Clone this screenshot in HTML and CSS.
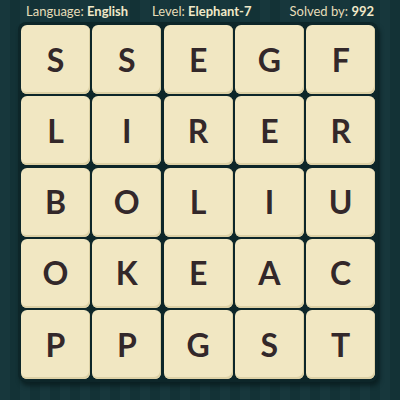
FILE: index.html
```html
<!DOCTYPE html>
<html>
<head>
<meta charset="utf-8">
<link rel="stylesheet" href="styles.css">
</head>
<body>
<div class="page">
  <div class="header">
    <span class="info">Language: <b>English</b></span>
    <span class="info">Level: <b>Elephant-7</b></span>
    <span class="info solved">Solved by: <b>992</b></span>
  </div>
  <div class="board">
    <div class="tile">S</div><div class="tile">S</div><div class="tile">E</div><div class="tile">G</div><div class="tile">F</div>
    <div class="tile">L</div><div class="tile">I</div><div class="tile">R</div><div class="tile">E</div><div class="tile">R</div>
    <div class="tile">B</div><div class="tile">O</div><div class="tile">L</div><div class="tile">I</div><div class="tile">U</div>
    <div class="tile">O</div><div class="tile">K</div><div class="tile">E</div><div class="tile">A</div><div class="tile">C</div>
    <div class="tile">P</div><div class="tile">P</div><div class="tile">G</div><div class="tile">S</div><div class="tile">T</div>
  </div>
</div>
</body>
</html>
```
FILE: styles.css
```css
html, body {
  margin: 0;
  padding: 0;
}
body {
  width: 400px;
  height: 400px;
  overflow: hidden;
  background: repeating-linear-gradient(90deg, #17373c 0px, #17373c 10px, #133236 10px, #133236 20px);
  font-family: Lato, "Open Sans", sans-serif;
}
.page {
  display: flex;
  flex-direction: column;
  width: 400px;
  height: 400px;
}
.header {
  height: 22px;
  display: flex;
  align-items: center;
  gap: 24px;
  padding: 0 26px 0 26px;
  color: #e6ddb9;
  font-size: 13px;
  box-sizing: border-box;
}
.solved {
  margin-left: auto;
}
.info b {
  font-weight: 700;
  color: #f0e8c8;
}
.board {
  margin-left: 18px;
  width: 360px;
  box-sizing: border-box;
  padding: 3px;
  background: #0d2629;
  border-radius: 8px;
  box-shadow: 2px 4px 4px rgba(5, 20, 22, 0.6);
  display: grid;
  grid-template-columns: repeat(5, 69px);
  grid-auto-rows: 69px;
  gap: 2.3px;
}
.tile {
  background: #f1e7c2;
  border-radius: 6px;
  box-shadow: inset -1px -2px 0 #ddd1a6;
  display: flex;
  align-items: center;
  justify-content: center;
  color: #33282a;
  font-weight: 700;
  font-size: 32px;
  line-height: 1;
}
```
